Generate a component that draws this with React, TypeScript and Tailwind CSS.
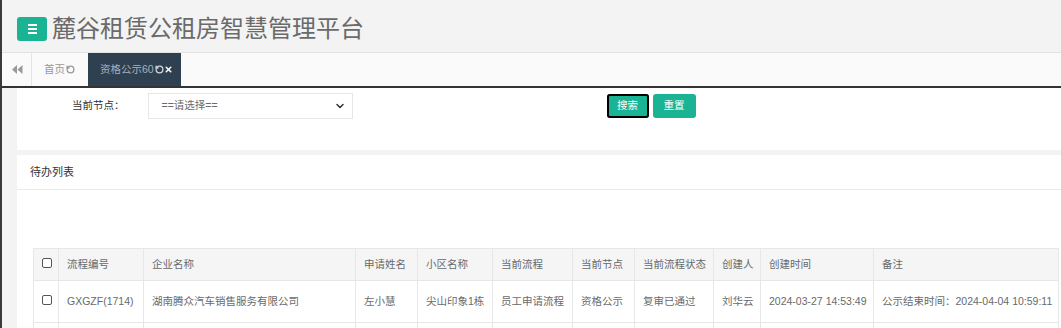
import { ChevronDown, RotateCw, X } from 'lucide-react';

const font = { fontFamily: '"Liberation Sans", "Noto Sans CJK SC", sans-serif' };

const cols = [
  { w: 25, label: '' },
  { w: 85, label: '流程编号' },
  { w: 212, label: '企业名称' },
  { w: 62, label: '申请姓名' },
  { w: 75, label: '小区名称' },
  { w: 80, label: '当前流程' },
  { w: 62, label: '当前节点' },
  { w: 79, label: '当前流程状态' },
  { w: 47, label: '创建人' },
  { w: 113, label: '创建时间' },
  { w: 185, label: '备注' },
];

const rows = [
  ['GXGZF(1714)', '湖南腾众汽车销售服务有限公司', '左小慧', '尖山印象1栋', '员工申请流程', '资格公示', '复审已通过', '刘华云', '2024-03-27 14:53:49', '公示结束时间：2024-04-04 10:59:11'],
  ['', '', '', '', '', '', '', '', '', ''],
];

function Checkbox() {
  return <span className="inline-block w-[10px] h-[10px] border border-[#555] rounded-[2px] bg-white" />;
}

function BackwardIcon() {
  return (
    <svg width="11" height="9" viewBox="0 0 11 9" fill="#9a9a9a">
      <polygon points="5,0 5,9 0,4.5" />
      <polygon points="10.5,0 10.5,9 5.5,4.5" />
    </svg>
  );
}

export default function App() {
  return (
    <div className="w-[1061px] h-[328px] overflow-hidden bg-[#f3f3f4] border-l-2 border-[#3a3a3a] text-[#676a6c]" style={font}>
      {/* top header */}
      <div className="h-[53px] bg-[#f3f3f3] border-b border-[#e2e2e2] flex items-start pt-[17px] pl-[15px]">
        <div className="w-[30px] h-[24px] rounded-[3px] bg-[#1ab394] flex flex-col items-center justify-center gap-[2px]">
          <span className="block w-[9px] h-[2px] bg-white" />
          <span className="block w-[9px] h-[2px] bg-white" />
          <span className="block w-[9px] h-[2px] bg-white" />
        </div>
        <div className="ml-[5px] -mt-[3px] text-[24px] leading-[30px] text-[#6a6a6a]">麓谷租赁公租房智慧管理平台</div>
      </div>

      {/* tabs */}
      <div className="h-[35px] bg-[#fafafa] border-b-2 border-[#333] flex">
        <div className="w-[30px] border-r border-[#e5e5e5] flex items-center justify-center pl-[1px]">
          <BackwardIcon />
        </div>
        <div className="w-[56px] flex items-center pl-[12px] text-[10.5px] text-[#999]">
          首页<RotateCw size={9} strokeWidth={3.5} className="ml-[1px] text-[#999] -scale-x-100" />
        </div>
        <div className="w-[93px] bg-[#2f4050] flex items-center pl-[12px] text-[10.5px] text-[#a7b1c2]">
          资格公示60
          <RotateCw size={9} strokeWidth={3.5} className="ml-[1px] text-[#cfd6e0] -scale-x-100" />
          <X size={9} strokeWidth={4} className="text-white" />
        </div>
      </div>

      <div className="pl-[15px]">
        {/* search panel */}
        <div className="bg-white h-[62px] flex items-start pt-[5px]">
          <div className="ml-[55px] h-[26px] flex items-center text-[10.5px] text-[#333]">当前节点：</div>
          <div className="ml-[23px] w-[205px] h-[26px] border border-[#e5e6e7] flex items-center justify-between pl-[13px] pr-[6px] text-[10.5px] text-[#676a6c]">
            <span>==请选择==</span>
            <ChevronDown size={12} strokeWidth={3} className="text-[#333]" />
          </div>
          <div className="ml-[254px] mt-[1px] flex gap-[4px]">
            <button className="w-[42px] h-[24px] rounded-[3px] bg-[#1ab394] text-white text-[10.5px] outline-2 outline-black -outline-offset-2">搜索</button>
            <button className="w-[43px] h-[24px] rounded-[3px] bg-[#1ab394] text-white text-[10.5px]">重置</button>
          </div>
        </div>

        {/* list panel */}
        <div className="mt-[5px] bg-white h-[200px]">
          <div className="h-[35px] border-b border-[#e7eaec] flex items-center pl-[13px] text-[11px] text-[#333]">待办列表</div>
          <div className="pt-[58px] pl-[16px]">
            <table className="table-fixed border-collapse text-[10.5px] text-[#676a6c]" style={{ width: 1025 }}>
              <colgroup>
                {cols.map((c, i) => (
                  <col key={i} style={{ width: c.w }} />
                ))}
              </colgroup>
              <thead>
                <tr className="h-[32px] bg-[#f5f5f6]">
                  {cols.map((c, i) => (
                    <th key={i} className="border border-[#e7e7e7] px-[8px] text-left font-normal whitespace-nowrap">
                      {i === 0 ? <Checkbox /> : c.label}
                    </th>
                  ))}
                </tr>
              </thead>
              <tbody>
                {rows.map((r, ri) => (
                  <tr key={ri} className="h-[42px]">
                    <td className="border border-[#e7e7e7] px-[8px]">{ri === 0 ? <Checkbox /> : null}</td>
                    {r.map((v, i) => (
                      <td key={i} className="border border-[#e7e7e7] px-[8px] whitespace-nowrap overflow-hidden">{v}</td>
                    ))}
                  </tr>
                ))}
              </tbody>
            </table>
          </div>
        </div>
      </div>
    </div>
  );
}
